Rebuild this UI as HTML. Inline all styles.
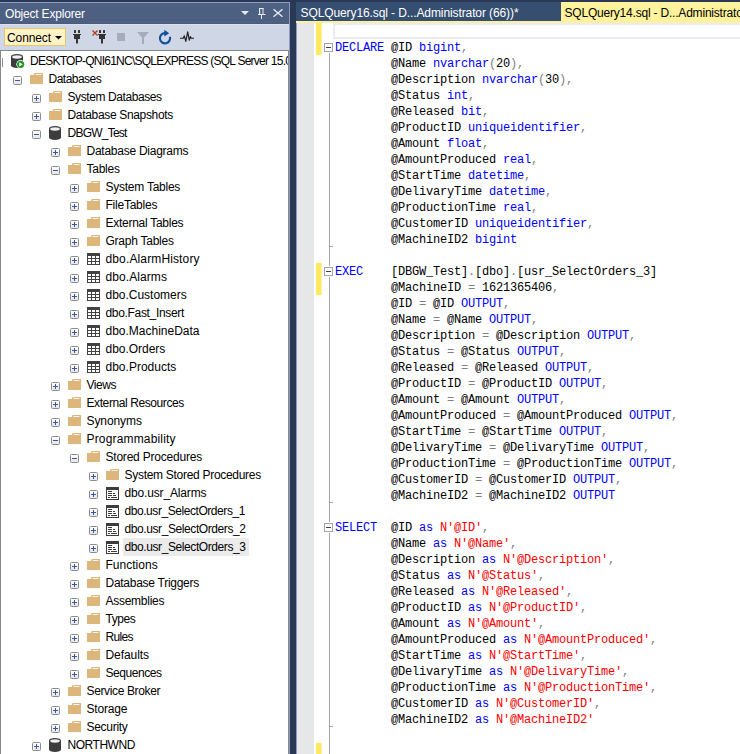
<!DOCTYPE html>
<html><head><meta charset="utf-8"><style>
*{margin:0;padding:0;box-sizing:border-box}
html,body{width:740px;height:754px;overflow:hidden;background:#293955;position:relative}
.a{position:absolute}
.ui{font-family:"Liberation Sans",sans-serif;white-space:pre}
.tr{position:absolute;height:18px;line-height:18px;font-family:"Liberation Sans",sans-serif;font-size:12px;letter-spacing:-0.3px;color:#000;white-space:pre}
.cl{position:absolute;left:335px;height:16px;line-height:16px;font-family:"Liberation Mono",monospace;font-size:12px;letter-spacing:-0.2px;color:#000;white-space:pre}
.k{color:#0000FF} .g{color:#808080} .s{color:#FF0000}
svg{position:absolute;display:block}
</style></head><body>
<div class="a" style="left:0;top:2px;width:290px;height:752px;background:#8E9BBC"></div>
<div class="a" style="left:0;top:3px;width:289px;height:20px;background:#4D6082"></div>
<div class="a ui" style="left:5px;top:4px;height:20px;line-height:20px;font-size:12px;letter-spacing:-0.2px;color:#fff">Object Explorer</div>
<svg style="left:241px;top:11px" width="8" height="4" viewBox="0 0 8 4"><path d="M0 0H8L4 4Z" fill="#E6EAF2"/></svg>
<svg style="left:258px;top:8px" width="8" height="12" viewBox="0 0 8 12"><path d="M1 0.5H5.5M1.5 0V6M5 0V6M0 6.5H7.5M3.5 6.5V11" stroke="#E6EAF2" stroke-width="1" fill="none"/><rect x="1" y="0" width="1.2" height="6" fill="#E6EAF2"/></svg>
<svg style="left:273px;top:9px" width="10" height="8" viewBox="0 0 10 8"><path d="M0.5 0.3L9.5 7.7M9.5 0.3L0.5 7.7" stroke="#E6EAF2" stroke-width="1.4" fill="none"/></svg>
<div class="a" style="left:0;top:23px;width:289px;height:1px;background:#4A5C7E"></div>
<div class="a" style="left:0;top:24px;width:289px;height:26px;background:#CFD6E5"></div>
<div class="a" style="left:0;top:24px;width:289px;height:1px;background:#D9DFEB"></div>
<div class="a" style="left:4px;top:28px;width:62px;height:18px;background:#FFF3C6;border:1px solid #E8C46C"></div>
<div class="a ui" style="left:7px;top:29px;height:18px;line-height:18px;font-size:12px;letter-spacing:-0.1px;color:#000">Connect</div>
<svg style="left:55px;top:36px" width="7" height="4" viewBox="0 0 7 4"><path d="M0 0H7L3.5 3.5Z" fill="#000"/></svg>
<svg style="left:73px;top:30px" width="8" height="14" viewBox="0 0 8 14"><path d="M1 0.5Q1 0 1.5 0H2.5Q3 0 3 0.5V3H1ZM5 0.5Q5 0 5.5 0H6.5Q7 0 7 0.5V3H5ZM0 4H8V5H7V9H5V13.5H3V9H1V5H0Z" fill="#333333"/></svg>
<svg style="left:98px;top:30px" width="8" height="14" viewBox="0 0 8 14"><path d="M1 0.5Q1 0 1.5 0H2.5Q3 0 3 0.5V3H1ZM5 0.5Q5 0 5.5 0H6.5Q7 0 7 0.5V3H5ZM0 4H8V5H7V9H5V13.5H3V9H1V5H0Z" fill="#333333"/></svg>
<svg style="left:92px;top:30px" width="6" height="6" viewBox="0 0 6 6"><path d="M0.5 0.5L5.5 5.5M5.5 0.5L0.5 5.5" stroke="#B5391C" stroke-width="1.3"/></svg>
<div class="a" style="left:117px;top:33px;width:8px;height:8px;background:#A6ACB9"></div>
<svg style="left:137px;top:32px" width="12" height="12" viewBox="0 0 12 12"><path d="M0 0H12L7 5.5V12H5V5.5Z" fill="#A6ACB9"/></svg>
<svg style="left:158px;top:29px" width="15" height="17" viewBox="0 0 15 17"><path d="M7 4.15A5.1 5.1 0 1 0 11.9 7.8" stroke="#0E4F9C" stroke-width="2.1" fill="none"/><path d="M6.3 0.8L11.2 4.3L6.3 7.6Z" fill="#0E4F9C"/></svg>
<svg style="left:180px;top:31px" width="14" height="11" viewBox="0 0 14 11"><path d="M0 7.25H3.3L4.3 4.8L5.8 10.3L7.7 0.8L9.3 9.2L10.4 5.6L11.2 7.25H14" stroke="#222" stroke-width="1.2" fill="none" stroke-linejoin="round"/></svg>
<div class="a" style="left:0;top:50px;width:289px;height:704px;background:#828790"></div>
<div class="a" style="left:1px;top:51px;width:287px;height:703px;background:#fff;overflow:hidden" id="tree">
<div class="a" style="left:1px;top:7px;width:1px;height:9px;background:#8C8C8C"></div>
<svg style="left:10px;top:3px" width="14" height="15" viewBox="0 0 14 15"><path d="M0 2.5A6 2.5 0 0 1 12 2.5V11.5A6 2.5 0 0 1 0 11.5Z" fill="#3C3C3C"/><ellipse cx="6" cy="3" rx="4.8" ry="1.7" fill="#F0F0F2"/><circle cx="9.6" cy="10.3" r="4.3" fill="#fff"/><circle cx="9.6" cy="10.3" r="3.6" fill="#1E9A24"/><path d="M8.2 8.2L11.8 10.3L8.2 12.4Z" fill="#fff"/></svg>
<div class="tr" style="left:29px;top:1px;letter-spacing:-0.75px">DESKTOP-QNI61NC\SQLEXPRESS (SQL Server 15.0.2000 - sa)</div>
<svg style="left:12px;top:25px" width="9" height="9" viewBox="0 0 9 9"><defs><linearGradient id="eg" x1="0" y1="0" x2="0" y2="1"><stop offset="0" stop-color="#fff"/><stop offset="1" stop-color="#E4E4E4"/></linearGradient></defs><rect x="0.5" y="0.5" width="8" height="8" rx="1" fill="url(#eg)" stroke="#8C8C8C"/><path d="M2 4.5H7" stroke="#3A57A0" stroke-width="1"/></svg>
<svg style="left:29px;top:22px" width="13" height="12" viewBox="0 0 13 12"><path d="M4.6 0H13V11H0V2H3.8Z" fill="#DCB67A"/><path d="M5.5 1.5H11.5" stroke="#FAF4EA" stroke-width="1"/></svg>
<div class="tr" style="left:47.5px;top:19px;letter-spacing:-0.512px">Databases</div>
<svg style="left:31px;top:43px" width="9" height="9" viewBox="0 0 9 9"><defs><linearGradient id="eg" x1="0" y1="0" x2="0" y2="1"><stop offset="0" stop-color="#fff"/><stop offset="1" stop-color="#E4E4E4"/></linearGradient></defs><rect x="0.5" y="0.5" width="8" height="8" rx="1" fill="url(#eg)" stroke="#8C8C8C"/><path d="M2 4.5H7M4.5 2V7" stroke="#3A57A0" stroke-width="1"/></svg>
<svg style="left:48px;top:40px" width="13" height="12" viewBox="0 0 13 12"><path d="M4.6 0H13V11H0V2H3.8Z" fill="#DCB67A"/><path d="M5.5 1.5H11.5" stroke="#FAF4EA" stroke-width="1"/></svg>
<div class="tr" style="left:66.5px;top:37px;letter-spacing:-0.407px">System Databases</div>
<svg style="left:31px;top:61px" width="9" height="9" viewBox="0 0 9 9"><defs><linearGradient id="eg" x1="0" y1="0" x2="0" y2="1"><stop offset="0" stop-color="#fff"/><stop offset="1" stop-color="#E4E4E4"/></linearGradient></defs><rect x="0.5" y="0.5" width="8" height="8" rx="1" fill="url(#eg)" stroke="#8C8C8C"/><path d="M2 4.5H7M4.5 2V7" stroke="#3A57A0" stroke-width="1"/></svg>
<svg style="left:48px;top:58px" width="13" height="12" viewBox="0 0 13 12"><path d="M4.6 0H13V11H0V2H3.8Z" fill="#DCB67A"/><path d="M5.5 1.5H11.5" stroke="#FAF4EA" stroke-width="1"/></svg>
<div class="tr" style="left:66.5px;top:55px;letter-spacing:-0.329px">Database Snapshots</div>
<svg style="left:31px;top:79px" width="9" height="9" viewBox="0 0 9 9"><defs><linearGradient id="eg" x1="0" y1="0" x2="0" y2="1"><stop offset="0" stop-color="#fff"/><stop offset="1" stop-color="#E4E4E4"/></linearGradient></defs><rect x="0.5" y="0.5" width="8" height="8" rx="1" fill="url(#eg)" stroke="#8C8C8C"/><path d="M2 4.5H7" stroke="#3A57A0" stroke-width="1"/></svg>
<svg style="left:48px;top:75px" width="12" height="14" viewBox="0 0 12 14"><path d="M0 2.5A6 2.5 0 0 1 12 2.5V11.5A6 2.5 0 0 1 0 11.5Z" fill="#3C3C3C"/><ellipse cx="6" cy="3" rx="4.8" ry="1.7" fill="#F0F0F2"/></svg>
<div class="tr" style="left:66.5px;top:73px;letter-spacing:-0.763px">DBGW_Test</div>
<svg style="left:50px;top:97px" width="9" height="9" viewBox="0 0 9 9"><defs><linearGradient id="eg" x1="0" y1="0" x2="0" y2="1"><stop offset="0" stop-color="#fff"/><stop offset="1" stop-color="#E4E4E4"/></linearGradient></defs><rect x="0.5" y="0.5" width="8" height="8" rx="1" fill="url(#eg)" stroke="#8C8C8C"/><path d="M2 4.5H7M4.5 2V7" stroke="#3A57A0" stroke-width="1"/></svg>
<svg style="left:67px;top:94px" width="13" height="12" viewBox="0 0 13 12"><path d="M4.6 0H13V11H0V2H3.8Z" fill="#DCB67A"/><path d="M5.5 1.5H11.5" stroke="#FAF4EA" stroke-width="1"/></svg>
<div class="tr" style="left:85.5px;top:91px;letter-spacing:-0.256px">Database Diagrams</div>
<svg style="left:50px;top:115px" width="9" height="9" viewBox="0 0 9 9"><defs><linearGradient id="eg" x1="0" y1="0" x2="0" y2="1"><stop offset="0" stop-color="#fff"/><stop offset="1" stop-color="#E4E4E4"/></linearGradient></defs><rect x="0.5" y="0.5" width="8" height="8" rx="1" fill="url(#eg)" stroke="#8C8C8C"/><path d="M2 4.5H7" stroke="#3A57A0" stroke-width="1"/></svg>
<svg style="left:67px;top:112px" width="13" height="12" viewBox="0 0 13 12"><path d="M4.6 0H13V11H0V2H3.8Z" fill="#DCB67A"/><path d="M5.5 1.5H11.5" stroke="#FAF4EA" stroke-width="1"/></svg>
<div class="tr" style="left:85.5px;top:109px;letter-spacing:-0.26px">Tables</div>
<svg style="left:69px;top:133px" width="9" height="9" viewBox="0 0 9 9"><defs><linearGradient id="eg" x1="0" y1="0" x2="0" y2="1"><stop offset="0" stop-color="#fff"/><stop offset="1" stop-color="#E4E4E4"/></linearGradient></defs><rect x="0.5" y="0.5" width="8" height="8" rx="1" fill="url(#eg)" stroke="#8C8C8C"/><path d="M2 4.5H7M4.5 2V7" stroke="#3A57A0" stroke-width="1"/></svg>
<svg style="left:86px;top:130px" width="13" height="12" viewBox="0 0 13 12"><path d="M4.6 0H13V11H0V2H3.8Z" fill="#DCB67A"/><path d="M5.5 1.5H11.5" stroke="#FAF4EA" stroke-width="1"/></svg>
<div class="tr" style="left:104.5px;top:127px;letter-spacing:-0.25px">System Tables</div>
<svg style="left:69px;top:151px" width="9" height="9" viewBox="0 0 9 9"><defs><linearGradient id="eg" x1="0" y1="0" x2="0" y2="1"><stop offset="0" stop-color="#fff"/><stop offset="1" stop-color="#E4E4E4"/></linearGradient></defs><rect x="0.5" y="0.5" width="8" height="8" rx="1" fill="url(#eg)" stroke="#8C8C8C"/><path d="M2 4.5H7M4.5 2V7" stroke="#3A57A0" stroke-width="1"/></svg>
<svg style="left:86px;top:148px" width="13" height="12" viewBox="0 0 13 12"><path d="M4.6 0H13V11H0V2H3.8Z" fill="#DCB67A"/><path d="M5.5 1.5H11.5" stroke="#FAF4EA" stroke-width="1"/></svg>
<div class="tr" style="left:104.5px;top:145px;letter-spacing:-0.233px">FileTables</div>
<svg style="left:69px;top:169px" width="9" height="9" viewBox="0 0 9 9"><defs><linearGradient id="eg" x1="0" y1="0" x2="0" y2="1"><stop offset="0" stop-color="#fff"/><stop offset="1" stop-color="#E4E4E4"/></linearGradient></defs><rect x="0.5" y="0.5" width="8" height="8" rx="1" fill="url(#eg)" stroke="#8C8C8C"/><path d="M2 4.5H7M4.5 2V7" stroke="#3A57A0" stroke-width="1"/></svg>
<svg style="left:86px;top:166px" width="13" height="12" viewBox="0 0 13 12"><path d="M4.6 0H13V11H0V2H3.8Z" fill="#DCB67A"/><path d="M5.5 1.5H11.5" stroke="#FAF4EA" stroke-width="1"/></svg>
<div class="tr" style="left:104.5px;top:163px;letter-spacing:-0.271px">External Tables</div>
<svg style="left:69px;top:187px" width="9" height="9" viewBox="0 0 9 9"><defs><linearGradient id="eg" x1="0" y1="0" x2="0" y2="1"><stop offset="0" stop-color="#fff"/><stop offset="1" stop-color="#E4E4E4"/></linearGradient></defs><rect x="0.5" y="0.5" width="8" height="8" rx="1" fill="url(#eg)" stroke="#8C8C8C"/><path d="M2 4.5H7M4.5 2V7" stroke="#3A57A0" stroke-width="1"/></svg>
<svg style="left:86px;top:184px" width="13" height="12" viewBox="0 0 13 12"><path d="M4.6 0H13V11H0V2H3.8Z" fill="#DCB67A"/><path d="M5.5 1.5H11.5" stroke="#FAF4EA" stroke-width="1"/></svg>
<div class="tr" style="left:104.5px;top:181px;letter-spacing:-0.245px">Graph Tables</div>
<svg style="left:69px;top:205px" width="9" height="9" viewBox="0 0 9 9"><defs><linearGradient id="eg" x1="0" y1="0" x2="0" y2="1"><stop offset="0" stop-color="#fff"/><stop offset="1" stop-color="#E4E4E4"/></linearGradient></defs><rect x="0.5" y="0.5" width="8" height="8" rx="1" fill="url(#eg)" stroke="#8C8C8C"/><path d="M2 4.5H7M4.5 2V7" stroke="#3A57A0" stroke-width="1"/></svg>
<svg style="left:86px;top:202px" width="13" height="12" viewBox="0 0 13 12"><rect width="13" height="12" fill="#424242"/><rect x="1" y="3" width="3" height="2" fill="#fff"/><rect x="1" y="6" width="3" height="2" fill="#fff"/><rect x="1" y="9" width="3" height="2" fill="#fff"/><rect x="5" y="3" width="3" height="2" fill="#fff"/><rect x="5" y="6" width="3" height="2" fill="#fff"/><rect x="5" y="9" width="3" height="2" fill="#fff"/><rect x="9" y="3" width="3" height="2" fill="#fff"/><rect x="9" y="6" width="3" height="2" fill="#fff"/><rect x="9" y="9" width="3" height="2" fill="#fff"/></svg>
<div class="tr" style="left:104.5px;top:199px;letter-spacing:0.133px">dbo.AlarmHistory</div>
<svg style="left:69px;top:223px" width="9" height="9" viewBox="0 0 9 9"><defs><linearGradient id="eg" x1="0" y1="0" x2="0" y2="1"><stop offset="0" stop-color="#fff"/><stop offset="1" stop-color="#E4E4E4"/></linearGradient></defs><rect x="0.5" y="0.5" width="8" height="8" rx="1" fill="url(#eg)" stroke="#8C8C8C"/><path d="M2 4.5H7M4.5 2V7" stroke="#3A57A0" stroke-width="1"/></svg>
<svg style="left:86px;top:220px" width="13" height="12" viewBox="0 0 13 12"><rect width="13" height="12" fill="#424242"/><rect x="1" y="3" width="3" height="2" fill="#fff"/><rect x="1" y="6" width="3" height="2" fill="#fff"/><rect x="1" y="9" width="3" height="2" fill="#fff"/><rect x="5" y="3" width="3" height="2" fill="#fff"/><rect x="5" y="6" width="3" height="2" fill="#fff"/><rect x="5" y="9" width="3" height="2" fill="#fff"/><rect x="9" y="3" width="3" height="2" fill="#fff"/><rect x="9" y="6" width="3" height="2" fill="#fff"/><rect x="9" y="9" width="3" height="2" fill="#fff"/></svg>
<div class="tr" style="left:104.5px;top:217px;letter-spacing:0.078px">dbo.Alarms</div>
<svg style="left:69px;top:241px" width="9" height="9" viewBox="0 0 9 9"><defs><linearGradient id="eg" x1="0" y1="0" x2="0" y2="1"><stop offset="0" stop-color="#fff"/><stop offset="1" stop-color="#E4E4E4"/></linearGradient></defs><rect x="0.5" y="0.5" width="8" height="8" rx="1" fill="url(#eg)" stroke="#8C8C8C"/><path d="M2 4.5H7M4.5 2V7" stroke="#3A57A0" stroke-width="1"/></svg>
<svg style="left:86px;top:238px" width="13" height="12" viewBox="0 0 13 12"><rect width="13" height="12" fill="#424242"/><rect x="1" y="3" width="3" height="2" fill="#fff"/><rect x="1" y="6" width="3" height="2" fill="#fff"/><rect x="1" y="9" width="3" height="2" fill="#fff"/><rect x="5" y="3" width="3" height="2" fill="#fff"/><rect x="5" y="6" width="3" height="2" fill="#fff"/><rect x="5" y="9" width="3" height="2" fill="#fff"/><rect x="9" y="3" width="3" height="2" fill="#fff"/><rect x="9" y="6" width="3" height="2" fill="#fff"/><rect x="9" y="9" width="3" height="2" fill="#fff"/></svg>
<div class="tr" style="left:104.5px;top:235px;letter-spacing:-0.017px">dbo.Customers</div>
<svg style="left:69px;top:259px" width="9" height="9" viewBox="0 0 9 9"><defs><linearGradient id="eg" x1="0" y1="0" x2="0" y2="1"><stop offset="0" stop-color="#fff"/><stop offset="1" stop-color="#E4E4E4"/></linearGradient></defs><rect x="0.5" y="0.5" width="8" height="8" rx="1" fill="url(#eg)" stroke="#8C8C8C"/><path d="M2 4.5H7M4.5 2V7" stroke="#3A57A0" stroke-width="1"/></svg>
<svg style="left:86px;top:256px" width="13" height="12" viewBox="0 0 13 12"><rect width="13" height="12" fill="#424242"/><rect x="1" y="3" width="3" height="2" fill="#fff"/><rect x="1" y="6" width="3" height="2" fill="#fff"/><rect x="1" y="9" width="3" height="2" fill="#fff"/><rect x="5" y="3" width="3" height="2" fill="#fff"/><rect x="5" y="6" width="3" height="2" fill="#fff"/><rect x="5" y="9" width="3" height="2" fill="#fff"/><rect x="9" y="3" width="3" height="2" fill="#fff"/><rect x="9" y="6" width="3" height="2" fill="#fff"/><rect x="9" y="9" width="3" height="2" fill="#fff"/></svg>
<div class="tr" style="left:104.5px;top:253px;letter-spacing:-0.329px">dbo.Fast_Insert</div>
<svg style="left:69px;top:277px" width="9" height="9" viewBox="0 0 9 9"><defs><linearGradient id="eg" x1="0" y1="0" x2="0" y2="1"><stop offset="0" stop-color="#fff"/><stop offset="1" stop-color="#E4E4E4"/></linearGradient></defs><rect x="0.5" y="0.5" width="8" height="8" rx="1" fill="url(#eg)" stroke="#8C8C8C"/><path d="M2 4.5H7M4.5 2V7" stroke="#3A57A0" stroke-width="1"/></svg>
<svg style="left:86px;top:274px" width="13" height="12" viewBox="0 0 13 12"><rect width="13" height="12" fill="#424242"/><rect x="1" y="3" width="3" height="2" fill="#fff"/><rect x="1" y="6" width="3" height="2" fill="#fff"/><rect x="1" y="9" width="3" height="2" fill="#fff"/><rect x="5" y="3" width="3" height="2" fill="#fff"/><rect x="5" y="6" width="3" height="2" fill="#fff"/><rect x="5" y="9" width="3" height="2" fill="#fff"/><rect x="9" y="3" width="3" height="2" fill="#fff"/><rect x="9" y="6" width="3" height="2" fill="#fff"/><rect x="9" y="9" width="3" height="2" fill="#fff"/></svg>
<div class="tr" style="left:104.5px;top:271px;letter-spacing:-0.007px">dbo.MachineData</div>
<svg style="left:69px;top:295px" width="9" height="9" viewBox="0 0 9 9"><defs><linearGradient id="eg" x1="0" y1="0" x2="0" y2="1"><stop offset="0" stop-color="#fff"/><stop offset="1" stop-color="#E4E4E4"/></linearGradient></defs><rect x="0.5" y="0.5" width="8" height="8" rx="1" fill="url(#eg)" stroke="#8C8C8C"/><path d="M2 4.5H7M4.5 2V7" stroke="#3A57A0" stroke-width="1"/></svg>
<svg style="left:86px;top:292px" width="13" height="12" viewBox="0 0 13 12"><rect width="13" height="12" fill="#424242"/><rect x="1" y="3" width="3" height="2" fill="#fff"/><rect x="1" y="6" width="3" height="2" fill="#fff"/><rect x="1" y="9" width="3" height="2" fill="#fff"/><rect x="5" y="3" width="3" height="2" fill="#fff"/><rect x="5" y="6" width="3" height="2" fill="#fff"/><rect x="5" y="9" width="3" height="2" fill="#fff"/><rect x="9" y="3" width="3" height="2" fill="#fff"/><rect x="9" y="6" width="3" height="2" fill="#fff"/><rect x="9" y="9" width="3" height="2" fill="#fff"/></svg>
<div class="tr" style="left:104.5px;top:289px;letter-spacing:-0.022px">dbo.Orders</div>
<svg style="left:69px;top:313px" width="9" height="9" viewBox="0 0 9 9"><defs><linearGradient id="eg" x1="0" y1="0" x2="0" y2="1"><stop offset="0" stop-color="#fff"/><stop offset="1" stop-color="#E4E4E4"/></linearGradient></defs><rect x="0.5" y="0.5" width="8" height="8" rx="1" fill="url(#eg)" stroke="#8C8C8C"/><path d="M2 4.5H7M4.5 2V7" stroke="#3A57A0" stroke-width="1"/></svg>
<svg style="left:86px;top:310px" width="13" height="12" viewBox="0 0 13 12"><rect width="13" height="12" fill="#424242"/><rect x="1" y="3" width="3" height="2" fill="#fff"/><rect x="1" y="6" width="3" height="2" fill="#fff"/><rect x="1" y="9" width="3" height="2" fill="#fff"/><rect x="5" y="3" width="3" height="2" fill="#fff"/><rect x="5" y="6" width="3" height="2" fill="#fff"/><rect x="5" y="9" width="3" height="2" fill="#fff"/><rect x="9" y="3" width="3" height="2" fill="#fff"/><rect x="9" y="6" width="3" height="2" fill="#fff"/><rect x="9" y="9" width="3" height="2" fill="#fff"/></svg>
<div class="tr" style="left:104.5px;top:307px;letter-spacing:0.009px">dbo.Products</div>
<svg style="left:50px;top:331px" width="9" height="9" viewBox="0 0 9 9"><defs><linearGradient id="eg" x1="0" y1="0" x2="0" y2="1"><stop offset="0" stop-color="#fff"/><stop offset="1" stop-color="#E4E4E4"/></linearGradient></defs><rect x="0.5" y="0.5" width="8" height="8" rx="1" fill="url(#eg)" stroke="#8C8C8C"/><path d="M2 4.5H7M4.5 2V7" stroke="#3A57A0" stroke-width="1"/></svg>
<svg style="left:67px;top:328px" width="13" height="12" viewBox="0 0 13 12"><path d="M4.6 0H13V11H0V2H3.8Z" fill="#DCB67A"/><path d="M5.5 1.5H11.5" stroke="#FAF4EA" stroke-width="1"/></svg>
<div class="tr" style="left:85.5px;top:325px;letter-spacing:-0.425px">Views</div>
<svg style="left:50px;top:349px" width="9" height="9" viewBox="0 0 9 9"><defs><linearGradient id="eg" x1="0" y1="0" x2="0" y2="1"><stop offset="0" stop-color="#fff"/><stop offset="1" stop-color="#E4E4E4"/></linearGradient></defs><rect x="0.5" y="0.5" width="8" height="8" rx="1" fill="url(#eg)" stroke="#8C8C8C"/><path d="M2 4.5H7M4.5 2V7" stroke="#3A57A0" stroke-width="1"/></svg>
<svg style="left:67px;top:346px" width="13" height="12" viewBox="0 0 13 12"><path d="M4.6 0H13V11H0V2H3.8Z" fill="#DCB67A"/><path d="M5.5 1.5H11.5" stroke="#FAF4EA" stroke-width="1"/></svg>
<div class="tr" style="left:85.5px;top:343px;letter-spacing:-0.406px">External Resources</div>
<svg style="left:50px;top:367px" width="9" height="9" viewBox="0 0 9 9"><defs><linearGradient id="eg" x1="0" y1="0" x2="0" y2="1"><stop offset="0" stop-color="#fff"/><stop offset="1" stop-color="#E4E4E4"/></linearGradient></defs><rect x="0.5" y="0.5" width="8" height="8" rx="1" fill="url(#eg)" stroke="#8C8C8C"/><path d="M2 4.5H7M4.5 2V7" stroke="#3A57A0" stroke-width="1"/></svg>
<svg style="left:67px;top:364px" width="13" height="12" viewBox="0 0 13 12"><path d="M4.6 0H13V11H0V2H3.8Z" fill="#DCB67A"/><path d="M5.5 1.5H11.5" stroke="#FAF4EA" stroke-width="1"/></svg>
<div class="tr" style="left:85.5px;top:361px;letter-spacing:-0.086px">Synonyms</div>
<svg style="left:50px;top:385px" width="9" height="9" viewBox="0 0 9 9"><defs><linearGradient id="eg" x1="0" y1="0" x2="0" y2="1"><stop offset="0" stop-color="#fff"/><stop offset="1" stop-color="#E4E4E4"/></linearGradient></defs><rect x="0.5" y="0.5" width="8" height="8" rx="1" fill="url(#eg)" stroke="#8C8C8C"/><path d="M2 4.5H7" stroke="#3A57A0" stroke-width="1"/></svg>
<svg style="left:67px;top:382px" width="13" height="12" viewBox="0 0 13 12"><path d="M4.6 0H13V11H0V2H3.8Z" fill="#DCB67A"/><path d="M5.5 1.5H11.5" stroke="#FAF4EA" stroke-width="1"/></svg>
<div class="tr" style="left:85.5px;top:379px;letter-spacing:0.164px">Programmability</div>
<svg style="left:69px;top:403px" width="9" height="9" viewBox="0 0 9 9"><defs><linearGradient id="eg" x1="0" y1="0" x2="0" y2="1"><stop offset="0" stop-color="#fff"/><stop offset="1" stop-color="#E4E4E4"/></linearGradient></defs><rect x="0.5" y="0.5" width="8" height="8" rx="1" fill="url(#eg)" stroke="#8C8C8C"/><path d="M2 4.5H7" stroke="#3A57A0" stroke-width="1"/></svg>
<svg style="left:86px;top:400px" width="13" height="12" viewBox="0 0 13 12"><path d="M4.6 0H13V11H0V2H3.8Z" fill="#DCB67A"/><path d="M5.5 1.5H11.5" stroke="#FAF4EA" stroke-width="1"/></svg>
<div class="tr" style="left:104.5px;top:397px;letter-spacing:-0.213px">Stored Procedures</div>
<svg style="left:88px;top:421px" width="9" height="9" viewBox="0 0 9 9"><defs><linearGradient id="eg" x1="0" y1="0" x2="0" y2="1"><stop offset="0" stop-color="#fff"/><stop offset="1" stop-color="#E4E4E4"/></linearGradient></defs><rect x="0.5" y="0.5" width="8" height="8" rx="1" fill="url(#eg)" stroke="#8C8C8C"/><path d="M2 4.5H7M4.5 2V7" stroke="#3A57A0" stroke-width="1"/></svg>
<svg style="left:105px;top:418px" width="13" height="12" viewBox="0 0 13 12"><path d="M4.6 0H13V11H0V2H3.8Z" fill="#DCB67A"/><path d="M5.5 1.5H11.5" stroke="#FAF4EA" stroke-width="1"/></svg>
<div class="tr" style="left:123.5px;top:415px;letter-spacing:-0.291px">System Stored Procedures</div>
<svg style="left:88px;top:439px" width="9" height="9" viewBox="0 0 9 9"><defs><linearGradient id="eg" x1="0" y1="0" x2="0" y2="1"><stop offset="0" stop-color="#fff"/><stop offset="1" stop-color="#E4E4E4"/></linearGradient></defs><rect x="0.5" y="0.5" width="8" height="8" rx="1" fill="url(#eg)" stroke="#8C8C8C"/><path d="M2 4.5H7M4.5 2V7" stroke="#3A57A0" stroke-width="1"/></svg>
<svg style="left:105px;top:436px" width="13" height="13" viewBox="0 0 13 13"><rect width="13" height="13" fill="#3C3C3C"/><rect x="1" y="3" width="11" height="9" fill="#fff"/><path d="M2 4.5H6M2 6.5H6M7 6.5H9M2 8.5H6M7 8.5H10M2 10.5H4M5 10.5H11" stroke="#3C3C3C" stroke-width="1"/></svg>
<div class="tr" style="left:123.5px;top:433px;letter-spacing:-0.154px">dbo.usr_Alarms</div>
<svg style="left:88px;top:457px" width="9" height="9" viewBox="0 0 9 9"><defs><linearGradient id="eg" x1="0" y1="0" x2="0" y2="1"><stop offset="0" stop-color="#fff"/><stop offset="1" stop-color="#E4E4E4"/></linearGradient></defs><rect x="0.5" y="0.5" width="8" height="8" rx="1" fill="url(#eg)" stroke="#8C8C8C"/><path d="M2 4.5H7M4.5 2V7" stroke="#3A57A0" stroke-width="1"/></svg>
<svg style="left:105px;top:454px" width="13" height="13" viewBox="0 0 13 13"><rect width="13" height="13" fill="#3C3C3C"/><rect x="1" y="3" width="11" height="9" fill="#fff"/><path d="M2 4.5H6M2 6.5H6M7 6.5H9M2 8.5H6M7 8.5H10M2 10.5H4M5 10.5H11" stroke="#3C3C3C" stroke-width="1"/></svg>
<div class="tr" style="left:123.5px;top:451px;letter-spacing:-0.438px">dbo.usr_SelectOrders_1</div>
<svg style="left:88px;top:475px" width="9" height="9" viewBox="0 0 9 9"><defs><linearGradient id="eg" x1="0" y1="0" x2="0" y2="1"><stop offset="0" stop-color="#fff"/><stop offset="1" stop-color="#E4E4E4"/></linearGradient></defs><rect x="0.5" y="0.5" width="8" height="8" rx="1" fill="url(#eg)" stroke="#8C8C8C"/><path d="M2 4.5H7M4.5 2V7" stroke="#3A57A0" stroke-width="1"/></svg>
<svg style="left:105px;top:472px" width="13" height="13" viewBox="0 0 13 13"><rect width="13" height="13" fill="#3C3C3C"/><rect x="1" y="3" width="11" height="9" fill="#fff"/><path d="M2 4.5H6M2 6.5H6M7 6.5H9M2 8.5H6M7 8.5H10M2 10.5H4M5 10.5H11" stroke="#3C3C3C" stroke-width="1"/></svg>
<div class="tr" style="left:123.5px;top:469px;letter-spacing:-0.41px">dbo.usr_SelectOrders_2</div>
<svg style="left:88px;top:493px" width="9" height="9" viewBox="0 0 9 9"><defs><linearGradient id="eg" x1="0" y1="0" x2="0" y2="1"><stop offset="0" stop-color="#fff"/><stop offset="1" stop-color="#E4E4E4"/></linearGradient></defs><rect x="0.5" y="0.5" width="8" height="8" rx="1" fill="url(#eg)" stroke="#8C8C8C"/><path d="M2 4.5H7M4.5 2V7" stroke="#3A57A0" stroke-width="1"/></svg>
<svg style="left:105px;top:490px" width="13" height="13" viewBox="0 0 13 13"><rect width="13" height="13" fill="#3C3C3C"/><rect x="1" y="3" width="11" height="9" fill="#fff"/><path d="M2 4.5H6M2 6.5H6M7 6.5H9M2 8.5H6M7 8.5H10M2 10.5H4M5 10.5H11" stroke="#3C3C3C" stroke-width="1"/></svg>
<div class="a" style="left:122px;top:487px;width:126px;height:18px;background:#EBEBEB"></div>
<div class="tr" style="left:123.5px;top:487px;letter-spacing:-0.41px">dbo.usr_SelectOrders_3</div>
<svg style="left:69px;top:511px" width="9" height="9" viewBox="0 0 9 9"><defs><linearGradient id="eg" x1="0" y1="0" x2="0" y2="1"><stop offset="0" stop-color="#fff"/><stop offset="1" stop-color="#E4E4E4"/></linearGradient></defs><rect x="0.5" y="0.5" width="8" height="8" rx="1" fill="url(#eg)" stroke="#8C8C8C"/><path d="M2 4.5H7M4.5 2V7" stroke="#3A57A0" stroke-width="1"/></svg>
<svg style="left:86px;top:508px" width="13" height="12" viewBox="0 0 13 12"><path d="M4.6 0H13V11H0V2H3.8Z" fill="#DCB67A"/><path d="M5.5 1.5H11.5" stroke="#FAF4EA" stroke-width="1"/></svg>
<div class="tr" style="left:104.5px;top:505px;letter-spacing:0.013px">Functions</div>
<svg style="left:69px;top:529px" width="9" height="9" viewBox="0 0 9 9"><defs><linearGradient id="eg" x1="0" y1="0" x2="0" y2="1"><stop offset="0" stop-color="#fff"/><stop offset="1" stop-color="#E4E4E4"/></linearGradient></defs><rect x="0.5" y="0.5" width="8" height="8" rx="1" fill="url(#eg)" stroke="#8C8C8C"/><path d="M2 4.5H7M4.5 2V7" stroke="#3A57A0" stroke-width="1"/></svg>
<svg style="left:86px;top:526px" width="13" height="12" viewBox="0 0 13 12"><path d="M4.6 0H13V11H0V2H3.8Z" fill="#DCB67A"/><path d="M5.5 1.5H11.5" stroke="#FAF4EA" stroke-width="1"/></svg>
<div class="tr" style="left:104.5px;top:523px;letter-spacing:-0.269px">Database Triggers</div>
<svg style="left:69px;top:547px" width="9" height="9" viewBox="0 0 9 9"><defs><linearGradient id="eg" x1="0" y1="0" x2="0" y2="1"><stop offset="0" stop-color="#fff"/><stop offset="1" stop-color="#E4E4E4"/></linearGradient></defs><rect x="0.5" y="0.5" width="8" height="8" rx="1" fill="url(#eg)" stroke="#8C8C8C"/><path d="M2 4.5H7M4.5 2V7" stroke="#3A57A0" stroke-width="1"/></svg>
<svg style="left:86px;top:544px" width="13" height="12" viewBox="0 0 13 12"><path d="M4.6 0H13V11H0V2H3.8Z" fill="#DCB67A"/><path d="M5.5 1.5H11.5" stroke="#FAF4EA" stroke-width="1"/></svg>
<div class="tr" style="left:104.5px;top:541px;letter-spacing:-0.267px">Assemblies</div>
<svg style="left:69px;top:565px" width="9" height="9" viewBox="0 0 9 9"><defs><linearGradient id="eg" x1="0" y1="0" x2="0" y2="1"><stop offset="0" stop-color="#fff"/><stop offset="1" stop-color="#E4E4E4"/></linearGradient></defs><rect x="0.5" y="0.5" width="8" height="8" rx="1" fill="url(#eg)" stroke="#8C8C8C"/><path d="M2 4.5H7M4.5 2V7" stroke="#3A57A0" stroke-width="1"/></svg>
<svg style="left:86px;top:562px" width="13" height="12" viewBox="0 0 13 12"><path d="M4.6 0H13V11H0V2H3.8Z" fill="#DCB67A"/><path d="M5.5 1.5H11.5" stroke="#FAF4EA" stroke-width="1"/></svg>
<div class="tr" style="left:104.5px;top:559px;letter-spacing:-0.45px">Types</div>
<svg style="left:69px;top:583px" width="9" height="9" viewBox="0 0 9 9"><defs><linearGradient id="eg" x1="0" y1="0" x2="0" y2="1"><stop offset="0" stop-color="#fff"/><stop offset="1" stop-color="#E4E4E4"/></linearGradient></defs><rect x="0.5" y="0.5" width="8" height="8" rx="1" fill="url(#eg)" stroke="#8C8C8C"/><path d="M2 4.5H7M4.5 2V7" stroke="#3A57A0" stroke-width="1"/></svg>
<svg style="left:86px;top:580px" width="13" height="12" viewBox="0 0 13 12"><path d="M4.6 0H13V11H0V2H3.8Z" fill="#DCB67A"/><path d="M5.5 1.5H11.5" stroke="#FAF4EA" stroke-width="1"/></svg>
<div class="tr" style="left:104.5px;top:577px;letter-spacing:-0.675px">Rules</div>
<svg style="left:69px;top:601px" width="9" height="9" viewBox="0 0 9 9"><defs><linearGradient id="eg" x1="0" y1="0" x2="0" y2="1"><stop offset="0" stop-color="#fff"/><stop offset="1" stop-color="#E4E4E4"/></linearGradient></defs><rect x="0.5" y="0.5" width="8" height="8" rx="1" fill="url(#eg)" stroke="#8C8C8C"/><path d="M2 4.5H7M4.5 2V7" stroke="#3A57A0" stroke-width="1"/></svg>
<svg style="left:86px;top:598px" width="13" height="12" viewBox="0 0 13 12"><path d="M4.6 0H13V11H0V2H3.8Z" fill="#DCB67A"/><path d="M5.5 1.5H11.5" stroke="#FAF4EA" stroke-width="1"/></svg>
<div class="tr" style="left:104.5px;top:595px;letter-spacing:-0.071px">Defaults</div>
<svg style="left:69px;top:619px" width="9" height="9" viewBox="0 0 9 9"><defs><linearGradient id="eg" x1="0" y1="0" x2="0" y2="1"><stop offset="0" stop-color="#fff"/><stop offset="1" stop-color="#E4E4E4"/></linearGradient></defs><rect x="0.5" y="0.5" width="8" height="8" rx="1" fill="url(#eg)" stroke="#8C8C8C"/><path d="M2 4.5H7M4.5 2V7" stroke="#3A57A0" stroke-width="1"/></svg>
<svg style="left:86px;top:616px" width="13" height="12" viewBox="0 0 13 12"><path d="M4.6 0H13V11H0V2H3.8Z" fill="#DCB67A"/><path d="M5.5 1.5H11.5" stroke="#FAF4EA" stroke-width="1"/></svg>
<div class="tr" style="left:104.5px;top:613px;letter-spacing:-0.438px">Sequences</div>
<svg style="left:50px;top:637px" width="9" height="9" viewBox="0 0 9 9"><defs><linearGradient id="eg" x1="0" y1="0" x2="0" y2="1"><stop offset="0" stop-color="#fff"/><stop offset="1" stop-color="#E4E4E4"/></linearGradient></defs><rect x="0.5" y="0.5" width="8" height="8" rx="1" fill="url(#eg)" stroke="#8C8C8C"/><path d="M2 4.5H7M4.5 2V7" stroke="#3A57A0" stroke-width="1"/></svg>
<svg style="left:67px;top:634px" width="13" height="12" viewBox="0 0 13 12"><path d="M4.6 0H13V11H0V2H3.8Z" fill="#DCB67A"/><path d="M5.5 1.5H11.5" stroke="#FAF4EA" stroke-width="1"/></svg>
<div class="tr" style="left:85.5px;top:631px;letter-spacing:-0.362px">Service Broker</div>
<svg style="left:50px;top:655px" width="9" height="9" viewBox="0 0 9 9"><defs><linearGradient id="eg" x1="0" y1="0" x2="0" y2="1"><stop offset="0" stop-color="#fff"/><stop offset="1" stop-color="#E4E4E4"/></linearGradient></defs><rect x="0.5" y="0.5" width="8" height="8" rx="1" fill="url(#eg)" stroke="#8C8C8C"/><path d="M2 4.5H7M4.5 2V7" stroke="#3A57A0" stroke-width="1"/></svg>
<svg style="left:67px;top:652px" width="13" height="12" viewBox="0 0 13 12"><path d="M4.6 0H13V11H0V2H3.8Z" fill="#DCB67A"/><path d="M5.5 1.5H11.5" stroke="#FAF4EA" stroke-width="1"/></svg>
<div class="tr" style="left:85.5px;top:649px;letter-spacing:-0.167px">Storage</div>
<svg style="left:50px;top:673px" width="9" height="9" viewBox="0 0 9 9"><defs><linearGradient id="eg" x1="0" y1="0" x2="0" y2="1"><stop offset="0" stop-color="#fff"/><stop offset="1" stop-color="#E4E4E4"/></linearGradient></defs><rect x="0.5" y="0.5" width="8" height="8" rx="1" fill="url(#eg)" stroke="#8C8C8C"/><path d="M2 4.5H7M4.5 2V7" stroke="#3A57A0" stroke-width="1"/></svg>
<svg style="left:67px;top:670px" width="13" height="12" viewBox="0 0 13 12"><path d="M4.6 0H13V11H0V2H3.8Z" fill="#DCB67A"/><path d="M5.5 1.5H11.5" stroke="#FAF4EA" stroke-width="1"/></svg>
<div class="tr" style="left:85.5px;top:667px;letter-spacing:-0.286px">Security</div>
<svg style="left:31px;top:691px" width="9" height="9" viewBox="0 0 9 9"><defs><linearGradient id="eg" x1="0" y1="0" x2="0" y2="1"><stop offset="0" stop-color="#fff"/><stop offset="1" stop-color="#E4E4E4"/></linearGradient></defs><rect x="0.5" y="0.5" width="8" height="8" rx="1" fill="url(#eg)" stroke="#8C8C8C"/><path d="M2 4.5H7M4.5 2V7" stroke="#3A57A0" stroke-width="1"/></svg>
<svg style="left:48px;top:687px" width="12" height="14" viewBox="0 0 12 14"><path d="M0 2.5A6 2.5 0 0 1 12 2.5V11.5A6 2.5 0 0 1 0 11.5Z" fill="#3C3C3C"/><ellipse cx="6" cy="3" rx="4.8" ry="1.7" fill="#F0F0F2"/></svg>
<div class="tr" style="left:66.5px;top:685px;letter-spacing:-0.471px">NORTHWND</div>
</div>
<div class="a" style="left:296px;top:2px;width:265px;height:19px;background:#364E6F"></div>
<div class="a ui" style="left:300.5px;top:4px;height:19px;line-height:19px;font-size:12px;letter-spacing:-0.1px;color:#fff">SQLQuery16.sql - D...Administrator (66))*</div>
<div class="a" style="left:561px;top:2px;width:179px;height:21px;background:#FFF29D"></div>
<div class="a ui" style="left:564.5px;top:4px;height:19px;line-height:19px;font-size:12px;letter-spacing:-0.2px;color:#000">SQLQuery14.sql - D...Administrator (66))</div>
<div class="a" style="left:296px;top:21px;width:444px;height:2px;background:#FFF29D"></div>
<div class="a" style="left:296px;top:23px;width:444px;height:731px;background:#fff"></div>
<div class="a" style="left:296px;top:23px;width:1px;height:731px;background:#8E9BBC"></div>
<div class="a" style="left:297px;top:23px;width:17px;height:731px;background:#E6E7E8"></div>
<div class="a" style="left:333px;top:23px;width:407px;height:16px;border:2px solid #EAEAF2;border-right:none"></div>
<div class="a" style="left:316px;top:23px;width:5px;height:32px;background:#FFE75E"></div>
<div class="a" style="left:321px;top:23px;width:1px;height:32px;background:#FFF3A8"></div>
<div class="a" style="left:316px;top:263px;width:5px;height:32px;background:#FFE75E"></div>
<div class="a" style="left:321px;top:263px;width:1px;height:32px;background:#FFF3A8"></div>
<div class="a" style="left:316px;top:743px;width:5px;height:11px;background:#FFE75E"></div>
<div class="a" style="left:321px;top:743px;width:1px;height:11px;background:#FFF3A8"></div>
<svg style="left:324px;top:43px" width="9" height="9" viewBox="0 0 9 9"><rect x="0.5" y="0.5" width="8" height="8" fill="#fff" stroke="#A5A5A5"/><path d="M2 4.5H7" stroke="#404040" stroke-width="1"/></svg>
<svg style="left:324px;top:267px" width="9" height="9" viewBox="0 0 9 9"><rect x="0.5" y="0.5" width="8" height="8" fill="#fff" stroke="#A5A5A5"/><path d="M2 4.5H7" stroke="#404040" stroke-width="1"/></svg>
<svg style="left:324px;top:523px" width="9" height="9" viewBox="0 0 9 9"><rect x="0.5" y="0.5" width="8" height="8" fill="#fff" stroke="#A5A5A5"/><path d="M2 4.5H7" stroke="#404040" stroke-width="1"/></svg>
<div class="a" style="left:329px;top:53px;width:1px;height:213px;background:#A5A5A5"></div>
<div class="a" style="left:329px;top:277px;width:1px;height:245px;background:#A5A5A5"></div>
<div class="a" style="left:329px;top:533px;width:1px;height:221px;background:#A5A5A5"></div>
<div class="a" style="left:329px;top:246px;width:4px;height:1px;background:#A5A5A5"></div>
<div class="a" style="left:329px;top:502px;width:4px;height:1px;background:#A5A5A5"></div>
<div class="a" style="left:329px;top:726px;width:4px;height:1px;background:#A5A5A5"></div>
<div class="cl" style="top:40px"><span class="k">DECLARE</span> @ID <span class="k">bigint</span><span class="g">,</span></div>
<div class="cl" style="top:56px">        @Name <span class="k">nvarchar</span><span class="g">(</span>20<span class="g">)</span><span class="g">,</span></div>
<div class="cl" style="top:72px">        @Description <span class="k">nvarchar</span><span class="g">(</span>30<span class="g">)</span><span class="g">,</span></div>
<div class="cl" style="top:88px">        @Status <span class="k">int</span><span class="g">,</span></div>
<div class="cl" style="top:104px">        @Released <span class="k">bit</span><span class="g">,</span></div>
<div class="cl" style="top:120px">        @ProductID <span class="k">uniqueidentifier</span><span class="g">,</span></div>
<div class="cl" style="top:136px">        @Amount <span class="k">float</span><span class="g">,</span></div>
<div class="cl" style="top:152px">        @AmountProduced <span class="k">real</span><span class="g">,</span></div>
<div class="cl" style="top:168px">        @StartTime <span class="k">datetime</span><span class="g">,</span></div>
<div class="cl" style="top:184px">        @DelivaryTime <span class="k">datetime</span><span class="g">,</span></div>
<div class="cl" style="top:200px">        @ProductionTime <span class="k">real</span><span class="g">,</span></div>
<div class="cl" style="top:216px">        @CustomerID <span class="k">uniqueidentifier</span><span class="g">,</span></div>
<div class="cl" style="top:232px">        @MachineID2 <span class="k">bigint</span></div>
<div class="cl" style="top:264px"><span class="k">EXEC</span>    [DBGW_Test]<span class="g">.</span>[dbo]<span class="g">.</span>[usr_SelectOrders_3]</div>
<div class="cl" style="top:280px">        @MachineID <span class="g">=</span> 1621365406<span class="g">,</span></div>
<div class="cl" style="top:296px">        @ID <span class="g">=</span> @ID <span class="k">OUTPUT</span><span class="g">,</span></div>
<div class="cl" style="top:312px">        @Name <span class="g">=</span> @Name <span class="k">OUTPUT</span><span class="g">,</span></div>
<div class="cl" style="top:328px">        @Description <span class="g">=</span> @Description <span class="k">OUTPUT</span><span class="g">,</span></div>
<div class="cl" style="top:344px">        @Status <span class="g">=</span> @Status <span class="k">OUTPUT</span><span class="g">,</span></div>
<div class="cl" style="top:360px">        @Released <span class="g">=</span> @Released <span class="k">OUTPUT</span><span class="g">,</span></div>
<div class="cl" style="top:376px">        @ProductID <span class="g">=</span> @ProductID <span class="k">OUTPUT</span><span class="g">,</span></div>
<div class="cl" style="top:392px">        @Amount <span class="g">=</span> @Amount <span class="k">OUTPUT</span><span class="g">,</span></div>
<div class="cl" style="top:408px">        @AmountProduced <span class="g">=</span> @AmountProduced <span class="k">OUTPUT</span><span class="g">,</span></div>
<div class="cl" style="top:424px">        @StartTime <span class="g">=</span> @StartTime <span class="k">OUTPUT</span><span class="g">,</span></div>
<div class="cl" style="top:440px">        @DelivaryTime <span class="g">=</span> @DelivaryTime <span class="k">OUTPUT</span><span class="g">,</span></div>
<div class="cl" style="top:456px">        @ProductionTime <span class="g">=</span> @ProductionTime <span class="k">OUTPUT</span><span class="g">,</span></div>
<div class="cl" style="top:472px">        @CustomerID <span class="g">=</span> @CustomerID <span class="k">OUTPUT</span><span class="g">,</span></div>
<div class="cl" style="top:488px">        @MachineID2 <span class="g">=</span> @MachineID2 <span class="k">OUTPUT</span></div>
<div class="cl" style="top:520px"><span class="k">SELECT</span>  @ID <span class="k">as</span> <span class="s">N&#x27;@ID&#x27;</span><span class="g">,</span></div>
<div class="cl" style="top:536px">        @Name <span class="k">as</span> <span class="s">N&#x27;@Name&#x27;</span><span class="g">,</span></div>
<div class="cl" style="top:552px">        @Description <span class="k">as</span> <span class="s">N&#x27;@Description&#x27;</span><span class="g">,</span></div>
<div class="cl" style="top:568px">        @Status <span class="k">as</span> <span class="s">N&#x27;@Status&#x27;</span><span class="g">,</span></div>
<div class="cl" style="top:584px">        @Released <span class="k">as</span> <span class="s">N&#x27;@Released&#x27;</span><span class="g">,</span></div>
<div class="cl" style="top:600px">        @ProductID <span class="k">as</span> <span class="s">N&#x27;@ProductID&#x27;</span><span class="g">,</span></div>
<div class="cl" style="top:616px">        @Amount <span class="k">as</span> <span class="s">N&#x27;@Amount&#x27;</span><span class="g">,</span></div>
<div class="cl" style="top:632px">        @AmountProduced <span class="k">as</span> <span class="s">N&#x27;@AmountProduced&#x27;</span><span class="g">,</span></div>
<div class="cl" style="top:648px">        @StartTime <span class="k">as</span> <span class="s">N&#x27;@StartTime&#x27;</span><span class="g">,</span></div>
<div class="cl" style="top:664px">        @DelivaryTime <span class="k">as</span> <span class="s">N&#x27;@DelivaryTime&#x27;</span><span class="g">,</span></div>
<div class="cl" style="top:680px">        @ProductionTime <span class="k">as</span> <span class="s">N&#x27;@ProductionTime&#x27;</span><span class="g">,</span></div>
<div class="cl" style="top:696px">        @CustomerID <span class="k">as</span> <span class="s">N&#x27;@CustomerID&#x27;</span><span class="g">,</span></div>
<div class="cl" style="top:712px">        @MachineID2 <span class="k">as</span> <span class="s">N&#x27;@MachineID2&#x27;</span></div>
</body></html>
